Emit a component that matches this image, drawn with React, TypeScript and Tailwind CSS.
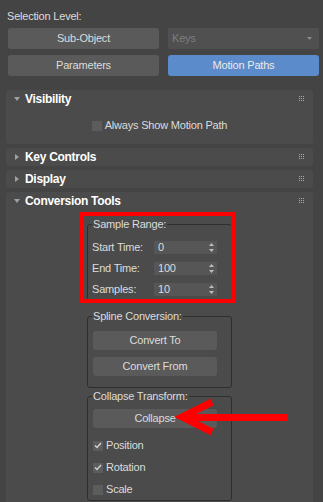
import type { ReactNode } from 'react';

function Grip() {
  return (
    <svg width="6" height="6" viewBox="0 0 6 6" className="mr-[8px]" shapeRendering="crispEdges">
      {[0, 2, 4].map((y) =>
        [0, 2, 4].map((x) => <rect key={`${x}-${y}`} x={x} y={y} width="1" height="1" fill="#a8a8a8" />)
      )}
    </svg>
  );
}

function Rollout({ title, open, children }: { title: string; open?: boolean; children?: ReactNode }) {
  return (
    <div className="bg-[#4b4b4b] rounded-[3px]">
      <div className="h-[18px] flex items-center">
        <div className="w-[19px] flex justify-center pl-[2px]">
          {open ? (
            <svg width="6" height="4" viewBox="0 0 6 4">
              <polygon points="0,0 6,0 3,4" fill="#a0a0a0" />
            </svg>
          ) : (
            <svg width="4" height="6" viewBox="0 0 4 6">
              <polygon points="0,0 4,3 0,6" fill="#a0a0a0" />
            </svg>
          )}
        </div>
        <span className="flex-1 font-bold text-[12px] tracking-[-0.3px] text-white">{title}</span>
        <Grip />
      </div>
      {children}
    </div>
  );
}

function Group({ label, className, children }: { label: string; className?: string; children: ReactNode }) {
  return (
    <div className={`relative mx-auto w-[145px] border border-[#2e2e2e] rounded-[3px] ${className ?? ''}`}>
      <span className="absolute -top-[7px] left-[4px] px-[1px] bg-[#4b4b4b] leading-[13px]">{label}</span>
      {children}
    </div>
  );
}

function Spinner({ value }: { value: string }) {
  return (
    <div className="w-[63px] h-[13px] bg-[#565656] flex items-center pl-[4px] pr-[3px]">
      <span className="flex-1 leading-[13px]">{value}</span>
      <svg width="5" height="9" viewBox="0 0 5 9">
        <polygon points="2.5,0 5,3 0,3" fill="#bdbdbd" />
        <polygon points="0,6 5,6 2.5,9" fill="#bdbdbd" />
      </svg>
    </div>
  );
}

function Check({ label, checked }: { label: string; checked?: boolean }) {
  return (
    <div className="flex items-center gap-[3px] h-[13px]">
      <div className="w-[10px] h-[10px] bg-[#5c5c5c] flex items-center justify-center">
        {checked && (
          <svg width="8" height="7" viewBox="0 0 8 7">
            <polyline points="1,3.5 3,5.5 7,1" fill="none" stroke="#cfcfcf" strokeWidth="1.5" />
          </svg>
        )}
      </div>
      <span className="leading-[13px]">{label}</span>
    </div>
  );
}

const btn = 'h-[21px] rounded-[3px] bg-[#5a5a5a] text-center leading-[21px]';
const smallBtn = 'w-[124px] h-[19px] rounded-[3px] bg-[#5a5a5a] text-center leading-[19px]';

export default function App() {
  return (
    <div className="relative w-[323px] h-[502px] overflow-hidden bg-[#444444] text-[#dcdcdc] text-[11px] tracking-[-0.2px] font-['Liberation_Sans',Arial,sans-serif]">
      <div className="pl-[7px] pt-[10px] leading-[13px]">Selection Level:</div>

      <div className="grid grid-cols-2 gap-x-[9px] gap-y-[6px] pl-[8px] pr-[4px] mt-[5px]">
        <div className={btn}>Sub-Object</div>
        <div className="h-[21px] rounded-[2px] bg-[#505050] flex items-center pl-[4px] pr-[7px] text-[#7e7e7e]">
          <span className="flex-1">Keys</span>
          <svg width="5" height="3" viewBox="0 0 5 3">
            <polygon points="0,0 5,0 2.5,3" fill="#8a8a8a" />
          </svg>
        </div>
        <div className={btn}>Parameters</div>
        <div className="h-[21px] rounded-[3px] bg-[#5b8bcb] text-center leading-[21px] text-[#eaeaea]">Motion Paths</div>
      </div>

      <div className="ml-[6px] w-[307px] mt-[14px] flex flex-col gap-[4px]">
        <Rollout title="Visibility" open>
          <div className="flex justify-center pt-[11px] pb-[12px]">
            <Check label="Always Show Motion Path" />
          </div>
        </Rollout>
        <Rollout title="Key Controls" />
        <Rollout title="Display" />
        <Rollout title="Conversion Tools" open>
          <div className="pt-[14px] pb-[20px]">
            <Group label="Sample Range:">
              <div className="flex flex-col gap-[8px] pt-[16px] pb-[4px] pl-[4px]">
                {[
                  ['Start Time:', '0'],
                  ['End Time:', '100'],
                  ['Samples:', '10'],
                ].map(([l, v]) => (
                  <div key={l} className="flex items-center h-[13px]">
                    <span className="w-[62px]">{l}</span>
                    <Spinner value={v} />
                  </div>
                ))}
              </div>
              <div className="absolute -left-[8px] -top-[13px] -right-[4px] -bottom-[3px] border-[4px] border-[#ff0000]" />
            </Group>

            <Group label="Spline Conversion:" className="mt-[15px]">
              <div className="flex flex-col gap-[7px] pt-[14px] pb-[11px] pl-[5px]">
                <div className={smallBtn}>Convert To</div>
                <div className={smallBtn}>Convert From</div>
              </div>
            </Group>

            <Group label="Collapse Transform:" className="mt-[8px]">
              <div className="flex flex-col pt-[12px] pb-[4px] pl-[5px]">
                <div className={smallBtn}>Collapse</div>
                <div className="flex flex-col gap-[9px] mt-[11px]">
                  <Check label="Position" checked />
                  <Check label="Rotation" checked />
                  <Check label="Scale" />
                </div>
              </div>
            </Group>
          </div>
        </Rollout>
      </div>

      <svg className="absolute left-0 top-0 pointer-events-none" width="323" height="502">
        <polyline points="212,402 182,417 212,432" fill="none" stroke="#ff0000" strokeWidth="7" />
        <line x1="186" y1="417.5" x2="287" y2="417.5" stroke="#ff0000" strokeWidth="7" />
      </svg>
    </div>
  );
}
